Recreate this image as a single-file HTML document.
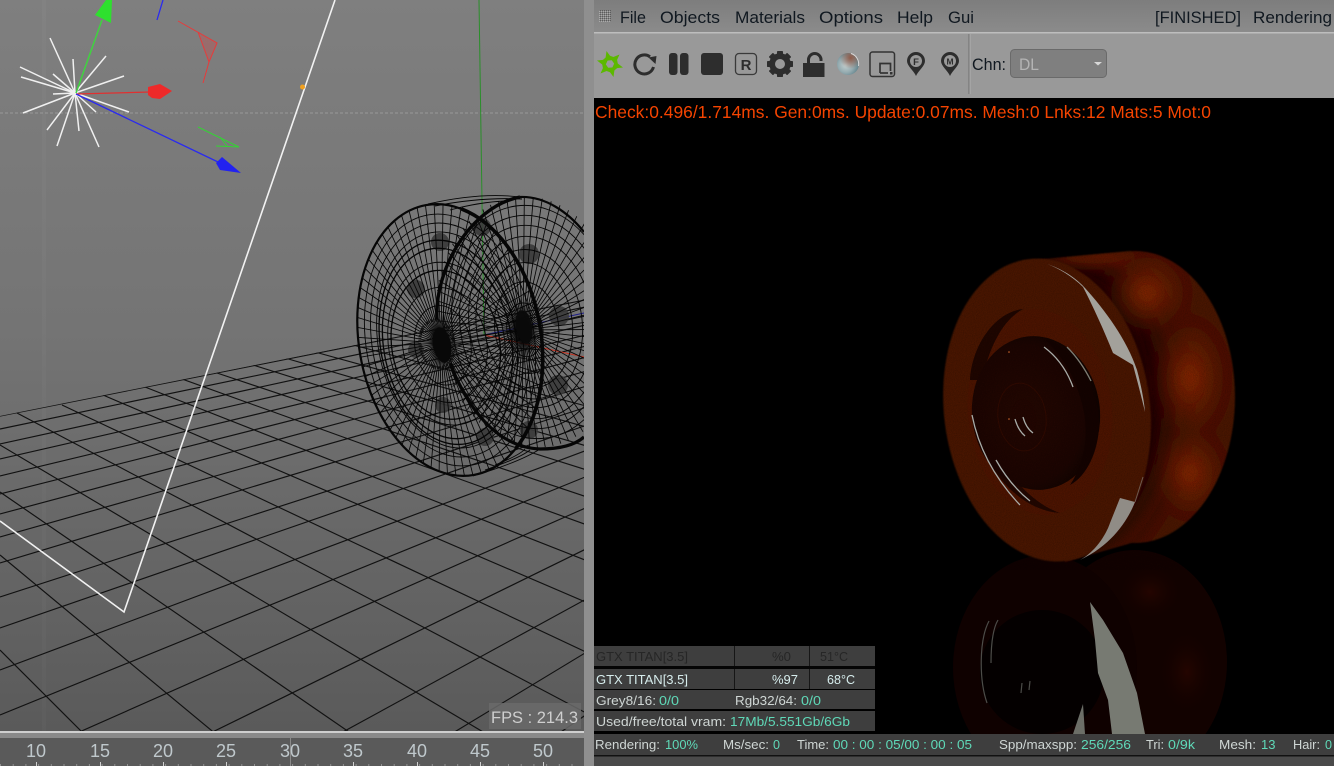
<!DOCTYPE html>
<html>
<head>
<meta charset="utf-8">
<title>Render view</title>
<style>
html,body{margin:0;padding:0;width:1334px;height:766px;background:#000;overflow:hidden}
svg{display:block}
text{font-family:"Liberation Sans",sans-serif}
.m{font-size:17px;fill:#101820}
.o{font-size:17.5px;fill:#f54400}
.s{font-size:13px;fill:#cfd6d4}
.t{font-size:13px;fill:#5fd9b8}
.d{font-size:13px;fill:#262626}
.n{font-size:18px;fill:#bfc8cc}
.ns{vector-effect:non-scaling-stroke}
</style>
</head>
<body>
<svg width="1334" height="766" viewBox="0 0 1334 766" xmlns="http://www.w3.org/2000/svg">
<defs>
<linearGradient id="bg" x1="0" y1="0" x2="0" y2="1">
<stop offset="0" stop-color="#7f7f7f"/><stop offset=".45" stop-color="#747474"/><stop offset=".86" stop-color="#616161"/><stop offset="1" stop-color="#5a5a5a"/>
</linearGradient>
<linearGradient id="menu" x1="0" y1="0" x2="0" y2="1"><stop offset="0" stop-color="#7d7d7d"/><stop offset="1" stop-color="#8b8b8b"/></linearGradient>
<radialGradient id="hot"><stop offset="0" stop-color="#942a00" stop-opacity=".95"/><stop offset=".55" stop-color="#702000" stop-opacity=".5"/><stop offset="1" stop-color="#5a1600" stop-opacity="0"/></radialGradient>
<radialGradient id="rhot"><stop offset="0" stop-color="#240500"/><stop offset="1" stop-color="#140200" stop-opacity="0"/></radialGradient>
<radialGradient id="hole" cx=".42" cy=".5" r=".6"><stop offset="0" stop-color="#240702"/><stop offset=".75" stop-color="#1c0502"/><stop offset="1" stop-color="#0e0301"/></radialGradient>
<radialGradient id="ball" cx=".4" cy=".55" r=".62"><stop offset="0" stop-color="#c4d0d0"/><stop offset=".55" stop-color="#95abb0"/><stop offset="1" stop-color="#5d7f88"/></radialGradient>
<radialGradient id="ball2" cx=".62" cy=".22" r=".5"><stop offset="0" stop-color="#8f5a48"/><stop offset="1" stop-color="#8f5a48" stop-opacity="0"/></radialGradient>
<pattern id="grip" width="2" height="2" patternUnits="userSpaceOnUse"><rect width="1" height="1" fill="#5c5c5c"/><rect x="1" y="1" width="1" height="1" fill="#aaa"/></pattern>
<clipPath id="vp"><rect x="0" y="0" width="584" height="732"/></clipPath>
<clipPath id="gridc"><polygon points="0,416 420,332 600,296 600,732 0,732"/></clipPath>
<clipPath id="fc"><ellipse cx="0" cy="0" rx="91" ry="137" transform="translate(450,340) rotate(-10)"/></clipPath>
<clipPath id="bc"><ellipse cx="0" cy="0" rx="95" ry="126" transform="translate(531,322) rotate(-7)"/></clipPath>
<clipPath id="ty"><ellipse cx="1135" cy="397" rx="100" ry="146"/><polygon points="1022,261 1130,251 1160,535 1065,562"/></clipPath>
<filter id="b12" x="-30%" y="-30%" width="160%" height="160%"><feGaussianBlur stdDeviation="16"/></filter>
<filter id="b6" x="-50%" y="-100%" width="200%" height="300%"><feGaussianBlur stdDeviation="6"/></filter>
<filter id="b7" x="-30%" y="-30%" width="160%" height="160%"><feGaussianBlur stdDeviation="7"/></filter>
<filter id="b1" x="-5%" y="-5%" width="110%" height="110%"><feGaussianBlur stdDeviation=".8"/></filter>
<filter id="grain" x="0" y="0" width="100%" height="100%"><feTurbulence type="fractalNoise" baseFrequency="1.1" numOctaves="1" seed="4"/><feColorMatrix values="0 0 0 0 0  0 0 0 0 0  0 0 0 0 0  0 0 0 1.3 -.45"/></filter>
<g id="a">
<line class="ns" x1="-1.3" y1="0" x2="1.3" y2="0"/>
<line class="ns" x1="-1.3" y1="0" x2="1.3" y2="0" transform="rotate(10)"/>
<line class="ns" x1="-1.3" y1="0" x2="1.3" y2="0" transform="rotate(20)"/>
<line class="ns" x1="-1.3" y1="0" x2="1.3" y2="0" transform="rotate(30)"/>
<line class="ns" x1="-1.3" y1="0" x2="1.3" y2="0" transform="rotate(40)"/>
<line class="ns" x1="-1.3" y1="0" x2="1.3" y2="0" transform="rotate(50)"/>
</g>
<g id="sp"><use href="#a"/><use href="#a" transform="rotate(60)"/><use href="#a" transform="rotate(120)"/><use href="#a" transform="rotate(5)"/><use href="#a" transform="rotate(65)"/><use href="#a" transform="rotate(125)"/></g>
<path id="pin" d="M0,12 C-2,7 -9,2 -9,-3 A9,9 0 1 1 9,-3 C9,2 2,7 0,12Z" fill="#2d2d2d"/>
<polygon id="blade" points="-4.800,-3.200 -3.500,-13 0,-8.200 6.200,-6 1.600,-3.800" fill="#5cb800"/>
</defs>

<!-- LEFT VIEWPORT -->
<rect x="0" y="0" width="585" height="732" fill="url(#bg)"/>
<rect x="42" y="0" width="4" height="732" fill="#fff" opacity=".025"/>
<line x1="0" y1="113" x2="584" y2="113" stroke="#a4a4a4" stroke-width="1" stroke-dasharray="3 2" opacity=".75"/>

<g clip-path="url(#vp)">
<g clip-path="url(#gridc)" stroke="#111" stroke-width="1.150" fill="none">
<line x1="0" y1="416" x2="590" y2="299"/><line x1="0" y1="429" x2="590" y2="306"/><line x1="0" y1="444" x2="590" y2="315"/><line x1="0" y1="459" x2="590" y2="324"/><line x1="0" y1="476" x2="590" y2="334"/><line x1="0" y1="494" x2="590" y2="345"/><line x1="0" y1="514" x2="590" y2="356"/><line x1="0" y1="537" x2="590" y2="370"/><line x1="0" y1="563" x2="590" y2="385"/><line x1="0" y1="597" x2="590" y2="406"/><line x1="0" y1="628" x2="590" y2="424"/><line x1="0" y1="670" x2="590" y2="449"/><line x1="0" y1="715" x2="590" y2="475"/><line x1="50" y1="745" x2="590" y2="506"/><line x1="186" y1="745" x2="590" y2="547"/><line x1="319" y1="745" x2="590" y2="597"/><line x1="433" y1="745" x2="590" y2="650"/><line x1="542" y1="745" x2="590" y2="712"/>
<line x1="0" y1="650" x2="95" y2="745"/><line x1="0" y1="555" x2="229" y2="745"/><line x1="0" y1="492" x2="368" y2="745"/><line x1="0" y1="445" x2="500" y2="742"/><line x1="17" y1="413" x2="590" y2="715"/><line x1="62" y1="405" x2="590" y2="654"/><line x1="103" y1="395" x2="590" y2="604"/><line x1="145" y1="387" x2="590" y2="562"/><line x1="182" y1="379" x2="590" y2="526"/><line x1="217" y1="373" x2="590" y2="498"/><line x1="253" y1="365" x2="590" y2="471"/><line x1="285" y1="358" x2="590" y2="447"/><line x1="315" y1="352" x2="590" y2="428"/><line x1="353" y1="345" x2="590" y2="407"/>
</g>

<!-- axis lines through wheel -->
<line x1="479" y1="0" x2="484" y2="335" stroke="#2a8f2a" stroke-width="1"/>
<line x1="484" y1="335" x2="584" y2="357" stroke="#c8301e" stroke-width="1"/>
<line x1="484" y1="335" x2="584" y2="313" stroke="#1c1c88" stroke-width="1"/>

<!-- discs -->
<g fill="#3a3a3a" opacity=".9">
<circle cx="440" cy="242" r="9"/><circle cx="482" cy="227" r="9"/><circle cx="529" cy="254" r="10"/><circle cx="559" cy="316" r="10"/><circle cx="558" cy="385" r="10"/><circle cx="529" cy="430" r="9"/><circle cx="485" cy="437" r="9"/><circle cx="443" cy="405" r="8"/><circle cx="416" cy="350" r="8"/><circle cx="416" cy="289" r="9"/>
</g>

<!-- back wire -->
<g clip-path="url(#bc)"><g transform="translate(523,330) rotate(-7) scale(95,126)" stroke="#050505" stroke-width=".85" fill="none"><use href="#sp"/></g></g>
<g transform="translate(531,322) rotate(-7)" fill="none" stroke="#050505" stroke-width=".9">
<ellipse rx="87" ry="117"/><ellipse rx="79" ry="107"/><ellipse rx="71" ry="97"/><ellipse rx="62" ry="86"/><ellipse cx="-2" cy="2" rx="53" ry="75"/><ellipse cx="-3" cy="3" rx="44" ry="63"/><ellipse cx="-5" cy="5" rx="32" ry="46"/><ellipse cx="-7" cy="7" rx="18" ry="27"/>
</g>
<!-- front wire -->
<g clip-path="url(#fc)"><g transform="translate(441,343) rotate(-10) scale(100,140)" stroke="#050505" stroke-width=".85" fill="none"><use href="#sp"/></g></g>
<g transform="translate(450,340) rotate(-10)" fill="none" stroke="#050505" stroke-width=".9">
<ellipse rx="84" ry="127"/><ellipse rx="78" ry="118"/><ellipse rx="72" ry="109"/><ellipse cx="-2" cy="2" rx="68" ry="103" stroke-width="1.3"/><ellipse cx="-3" cy="3" rx="64" ry="96" stroke-width="1.3"/><ellipse cx="-4" cy="3" rx="58" ry="82"/><ellipse cx="-5" cy="4" rx="54" ry="75" stroke-width="1.3"/><ellipse cx="-6" cy="4" rx="42" ry="58"/><ellipse cx="-8" cy="4" rx="28" ry="40"/>
</g>
<!-- hull connecting lines -->
<g stroke="#050505" stroke-width=".9" fill="none">
<path d="M428,204 Q480,192 520,197"/><path d="M435,206 Q480,197 522,199"/><path d="M450,210 Q480,202 505,201"/>
<path d="M473,476 Q520,462 540,449"/><path d="M485,470 Q520,458 530,450"/><path d="M495,465 Q520,455 525,449"/>
</g>
<!-- thick outlines -->
<g transform="translate(450,340) rotate(-10)" fill="none" stroke="#060606"><ellipse rx="91" ry="137" stroke-width="2.2"/><ellipse rx="91" ry="137" stroke-width="3.6" pathLength="100" stroke-dasharray="18 62 20 0"/></g>
<path d="M437,320 C434,270 470,207 520,197" fill="none" stroke="#060606" stroke-width="3.4"/>
<path d="M450,363 C462,395 490,447 540,449 C560,449 575,445 584,437" fill="none" stroke="#060606" stroke-width="3.200"/>
<path d="M520,197 C545,196 568,212 584,232" fill="none" stroke="#060606" stroke-width="2.200"/>
<!-- hubs -->
<ellipse cx="437" cy="344" rx="17" ry="24" fill="none" stroke="#111" stroke-width="3" stroke-dasharray="1.5 1" transform="rotate(-10 437 344)"/>
<ellipse cx="442" cy="345" rx="9" ry="18" fill="#080808" transform="rotate(-10 442 345)"/>
<ellipse cx="524" cy="327" rx="8" ry="17" fill="#0a0a0a" opacity=".95" transform="rotate(-10 524 327)"/>
</g>

<!-- white camera lines -->
<polyline points="0,521 124,612 335,0" fill="none" stroke="#f2f2f2" stroke-width="1.600"/>
<circle cx="302.500" cy="87" r="2.500" fill="#f0a020"/>

<!-- gizmo -->
<g stroke="#f0f0f0" stroke-width="1.500" fill="none">
<line x1="75" y1="93" x2="50" y2="38"/><line x1="75" y1="93" x2="73" y2="59"/><line x1="75" y1="93" x2="106" y2="56"/><line x1="75" y1="93" x2="124" y2="76"/><line x1="75" y1="93" x2="20" y2="67"/><line x1="75" y1="93" x2="21" y2="77"/><line x1="75" y1="93" x2="53" y2="74"/><line x1="75" y1="93" x2="53" y2="94"/><line x1="75" y1="93" x2="23" y2="113"/><line x1="75" y1="93" x2="47" y2="130"/><line x1="75" y1="93" x2="57" y2="146"/><line x1="75" y1="93" x2="79" y2="131"/><line x1="75" y1="93" x2="99" y2="147"/><line x1="75" y1="93" x2="129" y2="112"/><line x1="75" y1="93" x2="96" y2="112"/>
</g>
<line x1="76" y1="93" x2="102" y2="20" stroke="#3fd43f" stroke-width="1.500"/>
<polygon points="106,0 112,0 111,23 95,15" fill="#2ee02e"/>
<line x1="76" y1="94" x2="150" y2="92" stroke="#e03030" stroke-width="1.300"/>
<polygon points="148,87 160,84 172,91 160,99 152,98 148,95" fill="#ee2a2a"/>
<line x1="76" y1="94" x2="218" y2="162" stroke="#2a2af0" stroke-width="1.300"/>
<polygon points="222,157 241,173 220,170 216,163" fill="#2222f0"/>
<line x1="163" y1="0" x2="157" y2="20" stroke="#2a2af0" stroke-width="1.300"/>
<polygon points="198,32 217,43 209,62" fill="#e04040" opacity=".28"/>
<polyline points="178,21 217,43 209,62 203,83" fill="none" stroke="#e83a3a" stroke-width="1"/>
<line x1="198" y1="32" x2="209" y2="62" stroke="#e83a3a" stroke-width="1"/>
<polyline points="198,127 239,147 216,146" fill="none" stroke="#33d433" stroke-width="1"/>
<line x1="220" y1="137" x2="227" y2="146" stroke="#33d433" stroke-width="1"/>

<!-- FPS -->
<rect x="489" y="703" width="92" height="26" fill="#6a6a6a" opacity=".85"/>
<text x="491" y="723" font-size="17" fill="#cfcfcf" textLength="87" lengthAdjust="spacingAndGlyphs">FPS : 214.3</text>

<!-- timeline -->
<rect x="0" y="731" width="585" height="2" fill="#cfcfcf"/>
<rect x="0" y="733" width="585" height="5" fill="#8a8a8a"/>
<rect x="0" y="738" width="585" height="28" fill="#5a5a5a"/>
<line x1="290.500" y1="733" x2="290.500" y2="766" stroke="#8a8a8a" stroke-width="1"/>
<g text-anchor="middle">
<text class="n" x="36" y="757">10</text><text class="n" x="100" y="757">15</text><text class="n" x="163" y="757">20</text><text class="n" x="226" y="757">25</text><text class="n" x="290" y="757">30</text><text class="n" x="353" y="757">35</text><text class="n" x="417" y="757">40</text><text class="n" x="480" y="757">45</text><text class="n" x="543" y="757">50</text>
</g>
<line x1="0" y1="765" x2="585" y2="765" stroke="#c8c8c8" stroke-width="1" stroke-dasharray="1 11.7"/>
<g stroke="#d0d0d0" stroke-width="1"><line x1="36.500" y1="762" x2="36.500" y2="766"/><line x1="100.500" y1="762" x2="100.500" y2="766"/><line x1="163.500" y1="762" x2="163.500" y2="766"/><line x1="226.500" y1="762" x2="226.500" y2="766"/><line x1="353.500" y1="762" x2="353.500" y2="766"/><line x1="417.500" y1="762" x2="417.500" y2="766"/><line x1="480.500" y1="762" x2="480.500" y2="766"/><line x1="543.500" y1="762" x2="543.500" y2="766"/></g>

<!-- divider -->
<rect x="584" y="0" width="10" height="766" fill="#8f8f8f"/>

<!-- RIGHT PANE -->
<rect x="594" y="98" width="740" height="636" fill="#000"/>
<rect x="594" y="0" width="740" height="32" fill="url(#menu)"/>
<rect x="594" y="32" width="740" height="1.500" fill="#bdbdbd"/>
<rect x="594" y="33.500" width="740" height="64.500" fill="#999"/>

<rect x="599" y="10" width="12" height="12" fill="url(#grip)"/>
<text class="m" x="620" y="23" textLength="26" lengthAdjust="spacingAndGlyphs">File</text>
<text class="m" x="660" y="23" textLength="60" lengthAdjust="spacingAndGlyphs">Objects</text>
<text class="m" x="735" y="23" textLength="70" lengthAdjust="spacingAndGlyphs">Materials</text>
<text class="m" x="819" y="23" textLength="64" lengthAdjust="spacingAndGlyphs">Options</text>
<text class="m" x="897" y="23" textLength="36" lengthAdjust="spacingAndGlyphs">Help</text>
<text class="m" x="948" y="23" textLength="26" lengthAdjust="spacingAndGlyphs">Gui</text>
<text class="m" x="1155" y="23" textLength="86" lengthAdjust="spacingAndGlyphs">[FINISHED]</text>
<text class="m" x="1253" y="23" textLength="79" lengthAdjust="spacingAndGlyphs">Rendering</text>

<!-- Octane icon -->
<g transform="translate(610,64)">
<use href="#blade"/>
<use href="#blade" transform="rotate(60)"/>
<use href="#blade" transform="rotate(120)"/>
<use href="#blade" transform="rotate(180)"/>
<use href="#blade" transform="rotate(240)"/>
<use href="#blade" transform="rotate(300)"/>
</g>
<!-- reload -->
<path d="M650,56.800 A9.500,9.500 0 1 0 653.500,67" fill="none" stroke="#2d2d2d" stroke-width="3"/>
<polygon points="648.500,57.500 656.500,56 655.500,64" fill="#2d2d2d"/>
<!-- pause / stop -->
<rect x="669" y="53" width="8.500" height="22" rx="3" fill="#2d2d2d"/>
<rect x="680" y="53" width="8.500" height="22" rx="3" fill="#2d2d2d"/>
<rect x="701" y="53" width="22" height="22" rx="3" fill="#2d2d2d"/>
<!-- R -->
<rect x="735.500" y="53.500" width="21" height="21" rx="3.500" fill="none" stroke="#3a3a3a" stroke-width="1.300"/>
<text x="746" y="70" font-size="15" font-weight="700" fill="#2d2d2d" text-anchor="middle">R</text>
<!-- gear -->
<g transform="translate(780,64)" fill="#2d2d2d">
<circle r="7.800" fill="none" stroke="#2d2d2d" stroke-width="6"/>
<rect x="-3" y="-13" width="6" height="26" rx=".8"/>
<rect x="-3" y="-13" width="6" height="26" rx=".8" transform="rotate(45)"/>
<rect x="-3" y="-13" width="6" height="26" rx=".8" transform="rotate(90)"/>
<rect x="-3" y="-13" width="6" height="26" rx=".8" transform="rotate(135)"/>
<circle r="5" fill="#999"/>
</g>
<!-- unlock -->
<path d="M808.500,63 V59 A6.300,6.300 0 0 1 821,59 V61" fill="none" stroke="#2d2d2d" stroke-width="3"/>
<rect x="803" y="63" width="21.500" height="14" fill="#2d2d2d"/>
<!-- sphere -->
<circle cx="848" cy="64" r="11" fill="url(#ball)"/>
<circle cx="848" cy="64" r="11" fill="url(#ball2)"/>
<path d="M851,53.500 A11,11 0 0 1 858.500,66" fill="none" stroke="#d8d8d8" stroke-width="1"/>
<!-- box -->
<rect x="870" y="52" width="24.500" height="24.500" rx="2.500" fill="none" stroke="#333" stroke-width="1.500"/>
<path d="M880,73 V63.500 H890.500 V71" fill="none" stroke="#333" stroke-width="1.700"/>
<line x1="880" y1="73" x2="888" y2="73" stroke="#333" stroke-width="1.700"/>
<rect x="890" y="72" width="2.500" height="2.500" fill="#333"/>
<!-- pins -->
<g transform="translate(916,64)"><use href="#pin"/><circle cy="-3" r="6" fill="#999"/><text y="1" font-size="9.500" font-weight="700" text-anchor="middle" fill="#2d2d2d">F</text></g>
<g transform="translate(950,64)"><use href="#pin"/><circle cy="-3" r="6" fill="#999"/><text y="0.500" font-size="8.500" font-weight="700" text-anchor="middle" fill="#2d2d2d">M</text></g>
<line x1="969" y1="34" x2="969" y2="94" stroke="#6f6f6f" stroke-width="1"/>
<line x1="970" y1="34" x2="970" y2="94" stroke="#b0b0b0" stroke-width="1"/>
<text class="m" x="972" y="70" textLength="34" lengthAdjust="spacingAndGlyphs">Chn:</text>
<rect x="1010.500" y="49.500" width="96" height="28" rx="4" fill="#7f7f7f" stroke="#6a6a6a"/>
<text x="1019" y="70" font-size="17" fill="#b4b4b4" textLength="20" lengthAdjust="spacingAndGlyphs">DL</text>
<polygon points="1094,62 1102,62 1098,65.500" fill="#d8d8d8"/>

<text class="o" x="595" y="118" textLength="616" lengthAdjust="spacingAndGlyphs">Check:0.496/1.714ms. Gen:0ms. Update:0.07ms. Mesh:0 Lnks:12 Mats:5 Mot:0</text>

<!-- Reflection -->
<g>
<path d="M1064.500,734 A92,112 0 1 1 1205.500,734 Z" fill="#120200"/>
<path d="M971,734 A92,112 0 1 1 1119,734 Z" fill="#0f0100"/>
<ellipse cx="1150" cy="592" rx="32" ry="28" fill="url(#rhot)"/>
<ellipse cx="1187" cy="672" rx="28" ry="42" fill="url(#rhot)"/>
<ellipse cx="1042" cy="672" rx="62" ry="62" fill="#040000"/>
<polygon points="1090,602 1103,620 1123,653 1137,693 1145,734 1112,734 1108,700 1098,673 1095,640" fill="#777a72"/>
<polygon points="1083,704 1085,734 1073,734" fill="#6c6e67"/>
<g fill="none" stroke="#4c4c48" stroke-width="1.200">
<path d="M989,621 C979,640 979,680 987,703"/><path d="M998,620 C992,630 991,650 991,663"/>
<line x1="1022" y1="683" x2="1021" y2="693"/><line x1="1030" y1="681" x2="1029" y2="690"/>
</g>
</g>

<!-- Tyre hull -->
<g filter="url(#b1)"><g clip-path="url(#ty)">
<rect x="1000" y="240" width="250" height="330" fill="#4a1200"/>
<ellipse cx="1068" cy="405" rx="100" ry="150" fill="#1a0400" filter="url(#b12)"/>
<ellipse cx="1095" cy="258" rx="40" ry="6" fill="#6a1a00" filter="url(#b6)"/>
<g filter="url(#b7)">
<ellipse cx="1147" cy="293" rx="42" ry="42" fill="url(#hot)"/>
<ellipse cx="1190" cy="378" rx="38" ry="62" fill="url(#hot)"/>
<ellipse cx="1190" cy="473" rx="36" ry="46" fill="url(#hot)"/>
</g>
</g></g>
<!-- Tyre face -->
<ellipse cx="1047" cy="410" rx="103" ry="152" fill="#481200" transform="rotate(-7 1047 410)" filter="url(#b1)"/>
<ellipse cx="1040" cy="412" rx="72" ry="103" fill="#4c1401" transform="rotate(-6 1040 412)"/>
<path d="M970,380 C972,345 995,312 1023,309 C1003,320 990,345 982,380Z" fill="#1f0600"/>
<path d="M972,415 C978,460 1015,510 1060,513 C1030,503 995,465 983,417Z" fill="#220700"/>
<ellipse cx="1036" cy="413" rx="64" ry="77" fill="url(#hole)" transform="rotate(-6 1036 413)"/>
<path d="M1046,340 C1068,345 1090,375 1098,410 C1103,440 1090,475 1070,485 C1090,455 1090,420 1076,385 C1068,365 1056,350 1046,340Z" fill="#140300"/>
<ellipse cx="1022" cy="417" rx="24" ry="34" fill="none" stroke="#300a02" stroke-width="1" transform="rotate(-8 1022 417)"/>
<ellipse cx="1024" cy="417" rx="12" ry="18" fill="#220602" transform="rotate(-8 1024 417)"/>
<rect x="930" y="240" width="320" height="330" fill="#000" filter="url(#grain)" opacity=".35"/>

<path d="M1047,264 C1065,270 1078,280 1085,288 C1105,310 1127,340 1137,370 C1141,385 1144,400 1145,412 C1141,395 1137,380 1133,365 L1113,353 C1108,340 1095,310 1083,287 C1072,276 1058,268 1047,264Z" fill="#a3a19b"/>
<path d="M1120,498 L1135,502 C1128,520 1112,545 1080,560 C1095,552 1106,535 1110,523Z" fill="#908c86"/>
<line x1="1135" y1="502" x2="1143" y2="477" stroke="#6e5a50" stroke-width="1"/>
<g fill="none" stroke="#a8aca8" stroke-width="1.300">
<path d="M1044,347 Q1064,362 1073,387"/>
<path d="M1067,347 Q1081,361 1091,381" stroke="#7d7d74"/>
<path d="M972,415 Q982,465 1020,505"/>
<path d="M996,460 Q1010,485 1030,501"/>
<path d="M1015,419 Q1018,430 1025,436"/>
<path d="M1023,417 Q1026,428 1033,433"/>
</g>
<circle cx="1009" cy="352" r=".8" fill="#d06a30"/><circle cx="1009" cy="419" r=".8" fill="#d06a30"/>

<!-- Stats panels -->
<g fill="#3e3e3e">
<rect x="594" y="646" width="281" height="20"/><rect x="594" y="669" width="281" height="20"/><rect x="594" y="690" width="281" height="19"/><rect x="594" y="711" width="281" height="20"/>
</g>
<g stroke="#161616" stroke-width="1"><line x1="734.500" y1="646" x2="734.500" y2="689"/><line x1="809.500" y1="646" x2="809.500" y2="689"/></g>
<rect x="594" y="666" width="281" height="3" fill="#050505"/>
<text class="d" x="596" y="661" textLength="92" lengthAdjust="spacingAndGlyphs">GTX TITAN[3.5]</text>
<text class="d" x="772" y="661" textLength="19" lengthAdjust="spacingAndGlyphs">%0</text>
<text class="d" x="820" y="661" textLength="28" lengthAdjust="spacingAndGlyphs">51°C</text>
<text class="s" x="596" y="684" textLength="92" lengthAdjust="spacingAndGlyphs" style="fill:#d6ecec">GTX TITAN[3.5]</text>
<text class="s" x="772" y="684" textLength="26" lengthAdjust="spacingAndGlyphs" style="fill:#d6ecec">%97</text>
<text class="s" x="827" y="684" textLength="28" lengthAdjust="spacingAndGlyphs" style="fill:#d6ecec">68°C</text>
<text class="s" x="596" y="705" textLength="60" lengthAdjust="spacingAndGlyphs">Grey8/16:</text>
<text class="t" x="659" y="705" textLength="20" lengthAdjust="spacingAndGlyphs">0/0</text>
<text class="s" x="735" y="705" textLength="62" lengthAdjust="spacingAndGlyphs">Rgb32/64:</text>
<text class="t" x="801" y="705" textLength="20" lengthAdjust="spacingAndGlyphs">0/0</text>
<text class="s" x="596" y="726" textLength="130" lengthAdjust="spacingAndGlyphs">Used/free/total vram:</text>
<text class="t" x="730" y="726" textLength="120" lengthAdjust="spacingAndGlyphs">17Mb/5.551Gb/6Gb</text>

<!-- Status -->
<rect x="594" y="734" width="740" height="21" fill="#3e3e3e"/>
<rect x="594" y="755" width="740" height="1.500" fill="#111"/>
<rect x="594" y="756.500" width="740" height="9.500" fill="#4a4a4a"/>
<text class="s" x="595" y="749" textLength="65" lengthAdjust="spacingAndGlyphs">Rendering:</text>
<text class="t" x="665" y="749" textLength="33" lengthAdjust="spacingAndGlyphs">100%</text>
<text class="s" x="723" y="749" textLength="46" lengthAdjust="spacingAndGlyphs">Ms/sec:</text>
<text class="t" x="773" y="749" textLength="7" lengthAdjust="spacingAndGlyphs">0</text>
<text class="s" x="797" y="749" textLength="32" lengthAdjust="spacingAndGlyphs">Time:</text>
<text class="t" x="833" y="749" textLength="139" lengthAdjust="spacingAndGlyphs">00 : 00 : 05/00 : 00 : 05</text>
<text class="s" x="999" y="749" textLength="78" lengthAdjust="spacingAndGlyphs">Spp/maxspp:</text>
<text class="t" x="1081" y="749" textLength="50" lengthAdjust="spacingAndGlyphs">256/256</text>
<text class="s" x="1146" y="749" textLength="18" lengthAdjust="spacingAndGlyphs">Tri:</text>
<text class="t" x="1168" y="749" textLength="27" lengthAdjust="spacingAndGlyphs">0/9k</text>
<text class="s" x="1219" y="749" textLength="37" lengthAdjust="spacingAndGlyphs">Mesh:</text>
<text class="t" x="1261" y="749">13</text>
<text class="s" x="1293" y="749" textLength="27" lengthAdjust="spacingAndGlyphs">Hair:</text>
<text class="t" x="1325" y="749" textLength="7" lengthAdjust="spacingAndGlyphs">0</text>
</svg>
</body>
</html>
